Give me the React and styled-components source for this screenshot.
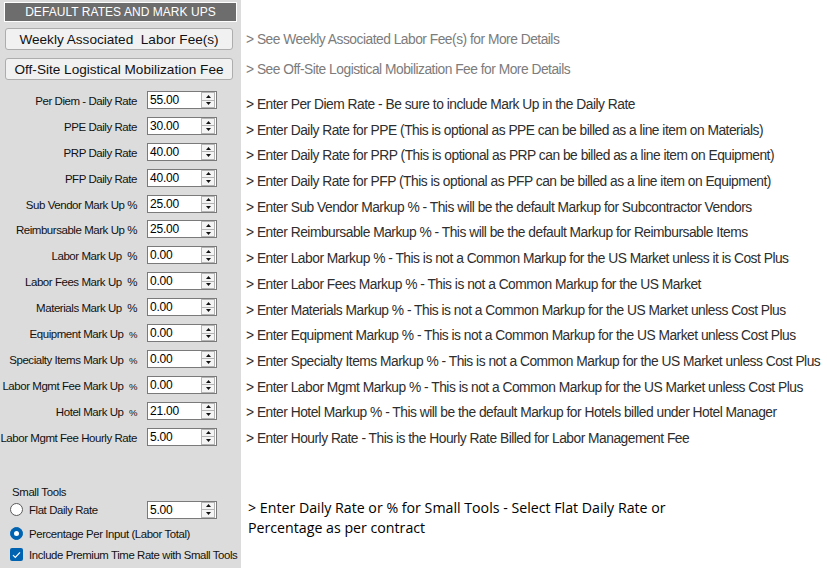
import React from "react";
import styled, { createGlobalStyle } from "styled-components";

const Global = createGlobalStyle`
  html, body { margin: 0; padding: 0; background: #ffffff; }
  body { font-family: "Liberation Sans", Arial, sans-serif; }
  * { box-sizing: border-box; }
`;

const Page = styled.div`
  width: 827px;
  height: 568px;
  display: flex;
  background: #ffffff;
  overflow: hidden;
`;

const LeftPanel = styled.div`
  width: 241px;
  height: 568px;
  flex: none;
  background: #dcdcdc;
  display: flex;
  flex-direction: column;
  padding-top: 2px;
`;

const Header = styled.div`
  margin: 0 4px 0 4px;
  height: 20px;
  border: 1px solid #ffffff;
  background: #6d6d6d;
  color: #ffffff;
  font-size: 12px;
  display: flex;
  align-items: center;
  justify-content: center;
  letter-spacing: 0.05px;
`;

const ActionButton = styled.button`
  margin: ${(p) => p.$top}px 8px 0 5px;
  height: 22px;
  border: 1px solid #adadad;
  border-radius: 3px;
  background: #f1f1f1;
  color: #111111;
  font-family: "Liberation Sans", Arial, sans-serif;
  font-size: 13.6px;
  padding: 0;
  white-space: pre;
  display: flex;
  align-items: center;
  justify-content: center;
`;

const FieldList = styled.div`
  margin-top: 11px;
  display: flex;
  flex-direction: column;
  gap: 7.9px;
`;

const FieldRow = styled.div`
  display: grid;
  grid-template-columns: 137px 70px;
  column-gap: 10px;
  height: 18px;
  align-items: center;
`;

const FieldLabel = styled.div`
  text-align: right;
  font-size: 11.5px;
  letter-spacing: -0.45px;
  color: #111111;
  white-space: pre;
  padding-top: 2px;
`;

const Pct = styled.span`
  font-size: ${(p) => (p.$small ? "9.5px" : "11.5px")};
`;

const NumBox = styled.div`
  height: 18px;
  border: 1px solid #7a7a7a;
  background: #ffffff;
  display: flex;
  align-items: stretch;
`;

const NumText = styled.div`
  flex: 1;
  font-size: 12px;
  letter-spacing: -0.2px;
  color: #000000;
  padding: 1px 0 0 2px;
  line-height: 14px;
`;

const Spinner = styled.div`
  width: 14px;
  margin: 0 1px 0 0;
  display: flex;
  flex-direction: column;
`;

const SpinHalf = styled.div`
  flex: 1;
  border: 1px solid #b4b4b4;
  border-top-width: ${(p) => (p.$down ? "0" : "1px")};
  background: #f4f4f4;
  display: flex;
  align-items: center;
  justify-content: center;
`;

const Arrow = ({ down }) => (
  <svg width="5" height="3" viewBox="0 0 5 3">
    {down ? <polygon points="0,0 5,0 2.5,3" fill="#111" /> : <polygon points="0,3 5,3 2.5,0" fill="#111" />}
  </svg>
);

const NumericInput = ({ value }) => (
  <NumBox>
    <NumText>{value}</NumText>
    <Spinner>
      <SpinHalf>
        <Arrow />
      </SpinHalf>
      <SpinHalf $down>
        <Arrow down />
      </SpinHalf>
    </Spinner>
  </NumBox>
);

const SmallTools = styled.div`
  margin-top: 38px;
  display: flex;
  flex-direction: column;
`;

const SectionTitle = styled.div`
  padding-left: 12px;
  font-size: 11.4px;
  letter-spacing: -0.35px;
  line-height: 16px;
  color: #111111;
`;

const OptionRow = styled.div`
  margin-top: ${(p) => p.$top}px;
  display: grid;
  grid-template-columns: 137px 70px;
  column-gap: 10px;
  height: 18px;
  align-items: center;
`;

const OptionLabel = styled.label`
  display: flex;
  align-items: center;
  gap: 6px;
  padding-left: 10px;
  font-size: 11.4px;
  letter-spacing: -0.4px;
  color: #111111;
  white-space: nowrap;
`;

const RadioDot = styled.span`
  width: 13px;
  height: 13px;
  border-radius: 50%;
  flex: none;
  background: ${(p) => (p.$on ? "#0063b1" : "#ffffff")};
  border: 1px solid ${(p) => (p.$on ? "#0063b1" : "#5a5a5a")};
  display: flex;
  align-items: center;
  justify-content: center;
  &::after {
    content: "";
    width: 5px;
    height: 5px;
    border-radius: 50%;
    background: #ffffff;
    display: ${(p) => (p.$on ? "block" : "none")};
  }
`;

const CheckBox = styled.span`
  width: 13px;
  height: 13px;
  border-radius: 2px;
  flex: none;
  background: #0063b1;
  display: flex;
  align-items: center;
  justify-content: center;
`;

const RightColumn = styled.div`
  flex: 1;
  min-width: 0;
  display: flex;
  flex-direction: column;
  padding-top: 30px;
  padding-left: 5px;
`;

const TopHints = styled.div`
  display: flex;
  flex-direction: column;
  gap: 10px;
`;

const Hint = styled.div`
  height: ${(p) => p.$h}px;
  line-height: ${(p) => p.$h}px;
  font-family: "Liberation Sans", Arial, sans-serif;
  font-size: 13.8px;
  letter-spacing: -0.5px;
  color: ${(p) => (p.$muted ? "#7c7c7c" : "#2e2e2e")};
  white-space: nowrap;
`;

const HintList = styled.div`
  margin-top: 12px;
  display: flex;
  flex-direction: column;
`;

const Note = styled.p`
  margin: 46px 0 0 2px;
  font-family: "Open Sans", "Noto Sans", sans-serif;
  font-size: 14.2px;
  line-height: 20px;
  color: #000000;
  width: 470px;
`;

const fields = [
  { label: "Per Diem - Daily Rate", value: "55.00" },
  { label: "PPE Daily Rate", value: "30.00" },
  { label: "PRP Daily Rate", value: "40.00" },
  { label: "PFP Daily Rate", value: "40.00" },
  { label: "Sub Vendor Mark Up ", pct: true, value: "25.00" },
  { label: "Reimbursable Mark Up ", pct: true, value: "25.00" },
  { label: "Labor Mark Up  ", pct: true, value: "0.00" },
  { label: "Labor Fees Mark Up  ", pct: true, value: "0.00" },
  { label: "Materials Mark Up  ", pct: true, value: "0.00" },
  { label: "Equipment Mark Up  ", pct: true, small: true, value: "0.00" },
  { label: "Specialty Items Mark Up  ", pct: true, small: true, value: "0.00" },
  { label: "Labor Mgmt Fee Mark Up  ", pct: true, small: true, value: "0.00" },
  { label: "Hotel Mark Up  ", pct: true, small: true, value: "21.00" },
  { label: "Labor Mgmt Fee Hourly Rate", value: "5.00" },
];

const hints = [
  "> Enter Per Diem Rate - Be sure to include Mark Up in the Daily Rate",
  "> Enter Daily Rate for PPE (This is optional as PPE can be billed as a line item on Materials)",
  "> Enter Daily Rate for PRP (This is optional as PRP can be billed as a line item on Equipment)",
  "> Enter Daily Rate for PFP (This is optional as PFP can be billed as a line item on Equipment)",
  "> Enter Sub Vendor Markup % - This will be the default Markup for Subcontractor Vendors",
  "> Enter Reimbursable Markup % - This will be the default Markup for Reimbursable Items",
  "> Enter Labor Markup % - This is not a Common Markup for the US Market unless it is Cost Plus",
  "> Enter Labor Fees Markup % - This is not a Common Markup for the US Market",
  "> Enter Materials Markup % - This is not a Common Markup for the US Market unless Cost Plus",
  "> Enter Equipment Markup % - This is not a Common Markup for the US Market unless Cost Plus",
  "> Enter Specialty Items Markup % - This is not a Common Markup for the US Market unless Cost Plus",
  "> Enter Labor Mgmt Markup % - This is not a Common Markup for the US Market unless Cost Plus",
  "> Enter Hotel Markup % - This will be the default Markup for Hotels billed under Hotel Manager",
  "> Enter Hourly Rate - This is the Hourly Rate Billed for Labor Management Fee",
];

export default function App() {
  return (
    <Page>
      <Global />
      <LeftPanel>
        <Header>DEFAULT RATES AND MARK UPS</Header>
        <ActionButton $top={6}>{"Weekly Associated  Labor Fee(s)"}</ActionButton>
        <ActionButton $top={8}>Off-Site Logistical Mobilization Fee</ActionButton>
        <FieldList>
          {fields.map((f) => (
            <FieldRow key={f.label}>
              <FieldLabel>
                {f.label}
                {f.pct && <Pct $small={f.small}>%</Pct>}
              </FieldLabel>
              <NumericInput value={f.value} />
            </FieldRow>
          ))}
        </FieldList>
        <SmallTools>
          <SectionTitle>Small Tools</SectionTitle>
          <OptionRow $top={1}>
            <OptionLabel>
              <RadioDot />
              Flat Daily Rate
            </OptionLabel>
            <NumericInput value="5.00" />
          </OptionRow>
          <OptionRow $top={6}>
            <OptionLabel>
              <RadioDot $on />
              Percentage Per Input (Labor Total)
            </OptionLabel>
          </OptionRow>
          <OptionRow $top={3}>
            <OptionLabel>
              <CheckBox>
                <svg width="9" height="8" viewBox="0 0 9 8">
                  <polyline points="1,4.2 3.3,6.5 8,1.3" fill="none" stroke="#ffffff" strokeWidth="1.2" />
                </svg>
              </CheckBox>
              Include Premium Time Rate with Small Tools
            </OptionLabel>
          </OptionRow>
        </SmallTools>
      </LeftPanel>
      <RightColumn>
        <TopHints>
          <Hint $h={20} $muted>
            {"> See Weekly Associated Labor Fee(s) for More Details"}
          </Hint>
          <Hint $h={20} $muted>
            {"> See Off-Site Logistical Mobilization Fee for More Details"}
          </Hint>
        </TopHints>
        <HintList>
          {hints.map((h) => (
            <Hint key={h} $h={25.7}>
              {h}
            </Hint>
          ))}
        </HintList>
        <Note>
          {"> Enter Daily Rate or % for Small Tools - Select Flat Daily Rate or Percentage as per contract"}
        </Note>
      </RightColumn>
    </Page>
  );
}
